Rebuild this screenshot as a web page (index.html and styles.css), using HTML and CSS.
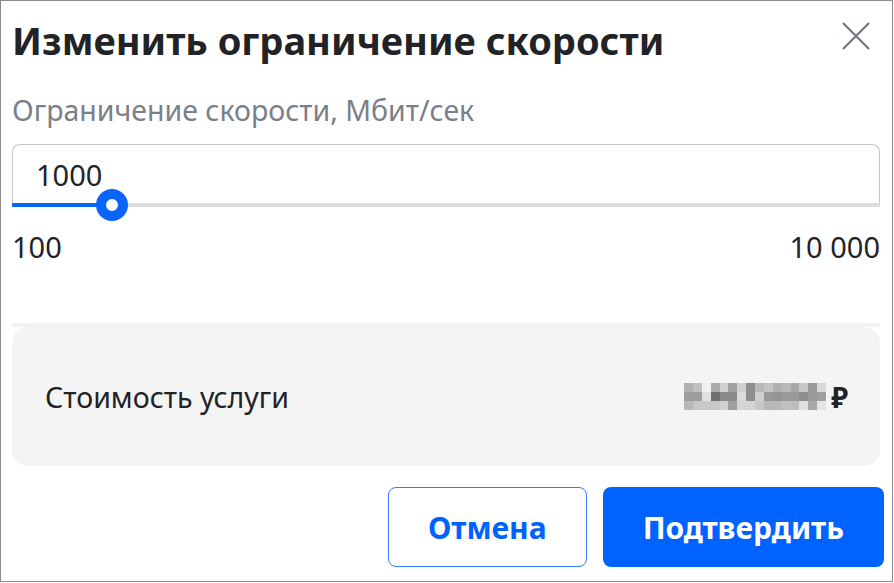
FILE: index.html
```html
<!DOCTYPE html>
<html lang="ru">
<head>
<meta charset="utf-8">
<title>Изменить ограничение скорости</title>
<link rel="stylesheet" href="styles.css">
</head>
<body>
<div class="dialog">
  <header class="header">
    <h1 class="title">Изменить ограничение скорости</h1>
    <button class="close" aria-label="Закрыть">
      <svg width="28" height="28" viewBox="0 0 28 28"><path d="M1 1L27 27M27 1L1 27" stroke="#6f7380" stroke-width="2" fill="none"/></svg>
    </button>
  </header>
  <div class="label">Ограничение скорости, Мбит/сек</div>
  <div class="field">
    <div class="input">1000</div>
    <div class="track">
      <div class="fill" style="width:100px"></div>
      <div class="thumb" style="left:84px"></div>
    </div>
  </div>
  <div class="range"><span>100</span><span>10 000</span></div>
  <div class="divider"></div>
  <div class="cost">
    <span class="cost-name">Стоимость услуги</span>
    <span class="price">
      <svg class="blur" width="142" height="27" viewBox="0 0 16 3" preserveAspectRatio="none" shape-rendering="crispEdges">
        <rect x="0" y="0" width="1" height="1" fill="#b0b0b0"/><rect x="1" y="0" width="1" height="1" fill="#c0c0c0"/><rect x="2" y="0" width="1" height="1" fill="#f0f0f0"/><rect x="3" y="0" width="1" height="1" fill="#aaaaaa"/><rect x="4" y="0" width="1" height="1" fill="#d0d0d0"/><rect x="5" y="0" width="1" height="1" fill="#a0a0a0"/><rect x="6" y="0" width="1" height="1" fill="#cfcfcf"/><rect x="7" y="0" width="1" height="1" fill="#8e8e8e"/><rect x="8" y="0" width="1" height="1" fill="#b8b8b8"/><rect x="9" y="0" width="1" height="1" fill="#c4c4c4"/><rect x="10" y="0" width="1" height="1" fill="#b0b0b0"/><rect x="11" y="0" width="1" height="1" fill="#b8b8b8"/><rect x="12" y="0" width="1" height="1" fill="#a8a8a8"/><rect x="13" y="0" width="1" height="1" fill="#c8c8c8"/><rect x="14" y="0" width="1" height="1" fill="#999999"/><rect x="15" y="0" width="1" height="1" fill="#d8d8d8"/>
        <rect x="0" y="1" width="1" height="1" fill="#9d9d9d"/><rect x="1" y="1" width="1" height="1" fill="#9d9d9d"/><rect x="2" y="1" width="1" height="1" fill="#e0e0e0"/><rect x="3" y="1" width="1" height="1" fill="#6f6f6f"/><rect x="4" y="1" width="1" height="1" fill="#8a8a8a"/><rect x="5" y="1" width="1" height="1" fill="#8a8a8a"/><rect x="6" y="1" width="1" height="1" fill="#dadada"/><rect x="7" y="1" width="1" height="1" fill="#8d8d8d"/><rect x="8" y="1" width="1" height="1" fill="#cfcfcf"/><rect x="9" y="1" width="1" height="1" fill="#999999"/><rect x="10" y="1" width="1" height="1" fill="#959595"/><rect x="11" y="1" width="1" height="1" fill="#9a9a9a"/><rect x="12" y="1" width="1" height="1" fill="#9a9a9a"/><rect x="13" y="1" width="1" height="1" fill="#8e8e8e"/><rect x="14" y="1" width="1" height="1" fill="#999999"/><rect x="15" y="1" width="1" height="1" fill="#a0a0a0"/>
        <rect x="0" y="2" width="1" height="1" fill="#b8b8b8"/><rect x="1" y="2" width="1" height="1" fill="#c8c8c8"/><rect x="2" y="2" width="1" height="1" fill="#c8c8c8"/><rect x="3" y="2" width="1" height="1" fill="#c8c8c8"/><rect x="4" y="2" width="1" height="1" fill="#d0d0d0"/><rect x="5" y="2" width="1" height="1" fill="#a0a0a0"/><rect x="6" y="2" width="1" height="1" fill="#d4d4d4"/><rect x="7" y="2" width="1" height="1" fill="#d4d4d4"/><rect x="8" y="2" width="1" height="1" fill="#c8c8c8"/><rect x="9" y="2" width="1" height="1" fill="#b8b8b8"/><rect x="10" y="2" width="1" height="1" fill="#b8b8b8"/><rect x="11" y="2" width="1" height="1" fill="#c0c0c0"/><rect x="12" y="2" width="1" height="1" fill="#bdbdbd"/><rect x="13" y="2" width="1" height="1" fill="#e0e0e0"/><rect x="14" y="2" width="1" height="1" fill="#a8a8a8"/><rect x="15" y="2" width="1" height="1" fill="#e4e4e4"/>
      </svg>
      <span class="rub">₽</span>
    </span>
  </div>
  <div class="actions">
    <button class="btn btn-outline">Отмена</button>
    <button class="btn btn-primary">Подтвердить</button>
  </div>
</div>
</body>
</html>
```

FILE: styles.css
```css
* { box-sizing: border-box; }

html, body {
  margin: 0;
  padding: 0;
  background: #ffffff;
}

body {
  font-family: "Noto Sans", "Open Sans", sans-serif;
  color: #222326;
}

.dialog {
  width: 893px;
  height: 582px;
  border: 1px solid #8c8c8c;
  padding: 0 12px 0 11px;
  display: flex;
  flex-direction: column;
  background: #ffffff;
}

.header {
  display: flex;
  justify-content: space-between;
  align-items: flex-start;
  padding-top: 16px;
  margin-right: 10px;
}

.title {
  margin: 0;
  font-size: 38px;
  line-height: 46px;
  font-weight: 700;
  color: #222326;
}

.close {
  border: 0;
  background: none;
  padding: 0;
  width: 28px;
  height: 28px;
  display: block;
  margin-top: 5px;
}

.close svg { display: block; }

.label {
  margin-top: 29px;
  font-size: 28.5px;
  line-height: 36px;
  color: #7b7f88;
}

.field {
  margin-top: 16px;
}

.input {
  height: 59px;
  border: 1px solid #c4c4c4;
  border-bottom: 0;
  border-radius: 8px 8px 0 0;
  padding-left: 23px;
  display: flex;
  align-items: center;
  font-size: 29px;
  color: #222326;
  padding-top: 0;
}

.track {
  position: relative;
  height: 4px;
  background: #dcdcdc;
}

.fill {
  height: 4px;
  background: #0a64ff;
}

.thumb {
  position: absolute;
  top: -14px;
  width: 32px;
  height: 32px;
  border-radius: 50%;
  background: #ffffff;
  border: 10px solid #0a64ff;
}

.range {
  display: flex;
  justify-content: space-between;
  margin-top: 24px;
  font-size: 29px;
  line-height: 32px;
  color: #222326;
}

.divider {
  margin-top: 60px;
  height: 4px;
  background: #f2f2f2;
}

.cost {
  height: 139px;
  background: #f4f4f4;
  border-radius: 16px;
  padding: 0 32px 0 33px;
  display: flex;
  align-items: center;
  justify-content: space-between;
  font-size: 28.5px;
}

.price {
  display: flex;
  align-items: center;
  gap: 5px;
}

.blur { display: block; }

.rub {
  font-weight: 700;
  font-size: 28px;
}

.actions {
  margin-top: 21px;
  margin-right: -4px;
  display: flex;
  justify-content: flex-end;
  gap: 16px;
}

.btn {
  height: 80px;
  padding: 0 40px;
  border-radius: 8px;
  font-family: "Noto Sans", sans-serif;
  font-size: 30px;
  font-weight: 700;
  cursor: pointer;
}

.btn-outline {
  background: #ffffff;
  border: 1px solid #2f7bff;
  color: #0062ff;
  padding: 0 39px;
}

.btn-primary {
  background: #0062ff;
  border: 0;
  color: #ffffff;
}
```
